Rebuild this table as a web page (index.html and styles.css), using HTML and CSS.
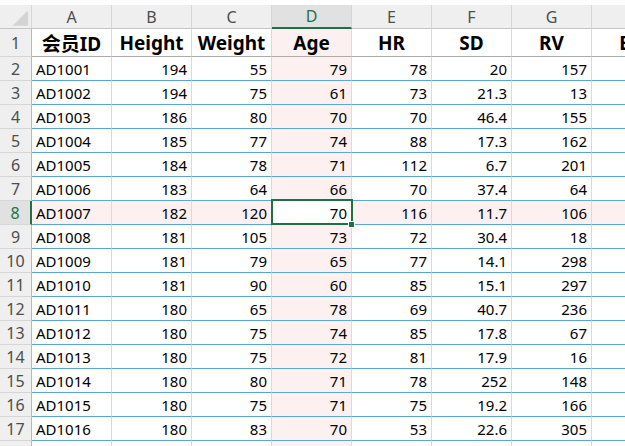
FILE: index.html
```html
<!DOCTYPE html>
<html lang="zh">
<head>
<meta charset="utf-8">
<title>Sheet</title>
<link rel="stylesheet" href="styles.css">
</head>
<body>
<div class="topstrip"></div>
<div class="sheet">
  <div class="corner"><svg width="32" height="24" viewBox="0 0 32 24"><polygon points="13,21 29,21 29,5" fill="#d4d4d4"/></svg></div>
  <div class="ch">A</div><div class="ch">B</div><div class="ch">C</div><div class="ch sel">D</div><div class="ch">E</div><div class="ch">F</div><div class="ch">G</div><div class="ch">H</div>

  <div class="rn">1</div>
  <div class="hd">会员ID</div><div class="hd">Height</div><div class="hd">Weight</div><div class="hd cold">Age</div><div class="hd">HR</div><div class="hd">SD</div><div class="hd">RV</div><div class="hd">BP</div>

  <div class="rn">2</div><div class="c id">AD1001</div><div class="c">194</div><div class="c">55</div><div class="c cold">79</div><div class="c">78</div><div class="c">20</div><div class="c">157</div><div class="c"></div>
  <div class="rn">3</div><div class="c id">AD1002</div><div class="c">194</div><div class="c">75</div><div class="c cold">61</div><div class="c">73</div><div class="c">21.3</div><div class="c">13</div><div class="c"></div>
  <div class="rn">4</div><div class="c id">AD1003</div><div class="c">186</div><div class="c">80</div><div class="c cold">70</div><div class="c">70</div><div class="c">46.4</div><div class="c">155</div><div class="c"></div>
  <div class="rn">5</div><div class="c id">AD1004</div><div class="c">185</div><div class="c">77</div><div class="c cold">74</div><div class="c">88</div><div class="c">17.3</div><div class="c">162</div><div class="c"></div>
  <div class="rn">6</div><div class="c id">AD1005</div><div class="c">184</div><div class="c">78</div><div class="c cold">71</div><div class="c">112</div><div class="c">6.7</div><div class="c">201</div><div class="c"></div>
  <div class="rn">7</div><div class="c id">AD1006</div><div class="c">183</div><div class="c">64</div><div class="c cold">66</div><div class="c">70</div><div class="c">37.4</div><div class="c">64</div><div class="c"></div>
  <div class="rn sel">8</div><div class="c id rowh">AD1007</div><div class="c rowh">182</div><div class="c rowh">120</div><div class="c cur">70</div><div class="c rowh">116</div><div class="c rowh">11.7</div><div class="c rowh">106</div><div class="c rowh"></div>
  <div class="rn">9</div><div class="c id">AD1008</div><div class="c">181</div><div class="c">105</div><div class="c cold">73</div><div class="c">72</div><div class="c">30.4</div><div class="c">18</div><div class="c"></div>
  <div class="rn">10</div><div class="c id">AD1009</div><div class="c">181</div><div class="c">79</div><div class="c cold">65</div><div class="c">77</div><div class="c">14.1</div><div class="c">298</div><div class="c"></div>
  <div class="rn">11</div><div class="c id">AD1010</div><div class="c">181</div><div class="c">90</div><div class="c cold">60</div><div class="c">85</div><div class="c">15.1</div><div class="c">297</div><div class="c"></div>
  <div class="rn">12</div><div class="c id">AD1011</div><div class="c">180</div><div class="c">65</div><div class="c cold">78</div><div class="c">69</div><div class="c">40.7</div><div class="c">236</div><div class="c"></div>
  <div class="rn">13</div><div class="c id">AD1012</div><div class="c">180</div><div class="c">75</div><div class="c cold">74</div><div class="c">85</div><div class="c">17.8</div><div class="c">67</div><div class="c"></div>
  <div class="rn">14</div><div class="c id">AD1013</div><div class="c">180</div><div class="c">75</div><div class="c cold">72</div><div class="c">81</div><div class="c">17.9</div><div class="c">16</div><div class="c"></div>
  <div class="rn">15</div><div class="c id">AD1014</div><div class="c">180</div><div class="c">80</div><div class="c cold">71</div><div class="c">78</div><div class="c">252</div><div class="c">148</div><div class="c"></div>
  <div class="rn">16</div><div class="c id">AD1015</div><div class="c">180</div><div class="c">75</div><div class="c cold">71</div><div class="c">75</div><div class="c">19.2</div><div class="c">166</div><div class="c"></div>
  <div class="rn">17</div><div class="c id">AD1016</div><div class="c">180</div><div class="c">83</div><div class="c cold">70</div><div class="c">53</div><div class="c">22.6</div><div class="c">305</div><div class="c"></div>
  <div class="rn"></div><div class="c id"></div><div class="c"></div><div class="c"></div><div class="c cold"></div><div class="c"></div><div class="c"></div><div class="c"></div><div class="c"></div>
</div>
</body>
</html>
```
FILE: styles.css
```css
html, body { margin: 0; padding: 0; background: #fff; overflow: hidden; }
body { width: 625px; height: 446px; font-family: "Noto Sans", "Noto Sans CJK SC", sans-serif; }
.topstrip { height: 5px; background: #fff; }
.sheet {
  display: grid;
  grid-template-columns: 32px repeat(8, 80px);
  grid-template-rows: 24px 28px repeat(17, 24px);
  width: 672px;
}
.sheet > div { box-sizing: border-box; overflow: hidden; white-space: nowrap; display: flex; align-items: center; }
.corner { background: #efefef; border-right: 1px solid #d6d6d6; border-bottom: 1px solid #c6c6c6; }
.corner svg { display: block; }
.ch { background: #efefef; border-right: 1px solid #d6d6d6; border-bottom: 1px solid #c6c6c6; justify-content: center; color: #4d4d4d; font-size: 16px; }
.ch.sel { background: #e1e1e1; color: #1e7145; border-bottom: 2px solid #1e7145; }
.rn { background: #efefef; border-right: 1px solid #b8b8b8; border-bottom: 1px solid #d6d6d6; justify-content: center; color: #4d4d4d; font-size: 16px; }
.rn.sel { background: #e1e1e1; color: #1e7145; border-right: 2px solid #1e7145; }
.hd { border-right: 1px solid #dadada; border-bottom: 1px solid #ababab; justify-content: center; font-weight: 700; font-size: 19px; color: #000; }
.c { border-right: 1px solid #dadada; border-bottom: 1px solid #5aa6d6; font-size: 15px; color: #000; padding: 0 4px; justify-content: flex-end; }
.c.id { justify-content: flex-start; }
.cold { background: #fdf0f0; }
.rowh { background: #fdf0f0; }
.cur { position: relative; background: #fff; overflow: visible !important; }
.cur::after { content: ""; position: absolute; left: -1px; top: -2px; width: 82px; height: 26px; box-sizing: border-box; border: 2px solid #1e7145; pointer-events: none; }
.cur::before { content: ""; position: absolute; right: -4px; bottom: -4px; width: 5px; height: 5px; background: #1e7145; border: 1px solid #fff; z-index: 2; }
```
